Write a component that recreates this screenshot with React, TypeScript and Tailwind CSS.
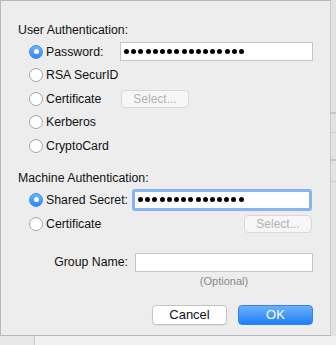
import React from 'react';

function Radio({ checked }: { checked?: boolean }) {
  if (checked) {
    return (
      <span className="w-[14px] h-[14px] shrink-0 rounded-full border border-[#3b8ef2] bg-gradient-to-b from-[#6db3fc] to-[#2b87f7] flex items-center justify-center">
        <span className="w-[5px] h-[5px] rounded-full bg-white" />
      </span>
    );
  }
  return (
    <span className="w-[14px] h-[14px] shrink-0 rounded-full border border-[#a8a8a8] bg-white shadow-[inset_0_1px_1px_rgba(0,0,0,0.06)]" />
  );
}

function Dots({ count }: { count: number }) {
  return (
    <span className="flex items-center gap-[2.2px]">
      {Array.from({ length: count }).map((_, i) => (
        <span key={i} className="w-[5px] h-[5px] rounded-full bg-black" />
      ))}
    </span>
  );
}

function SelectButton() {
  return (
    <div className="w-[68px] h-[18px] rounded-[4px] border border-[#d8d8d8] bg-[#f6f6f6] flex items-center justify-center text-[12px] text-[#b3b3b3]">
      Select...
    </div>
  );
}

export default function App() {
  return (
    <div className="w-[336px] h-[345px] bg-[#f3f3f3] flex flex-col overflow-hidden" style={{ fontFamily: '"Liberation Sans", Arial, sans-serif' }}>
      <div className="flex h-[336px]">
        {/* Sheet */}
        <div className="w-[331px] h-[336px] bg-[#ededed] border-l border-t border-b border-[#b9b9b9] border-r-[#c9c9c9] border-r flex flex-col text-[12.3px] leading-[16px] text-[#111]">
          <div className="mt-[21px] pl-[17px]">User Authentication:</div>

          <div className="mt-[2px] flex flex-col pl-[28px]">
            <div className="h-[23.5px] flex items-center">
              <Radio checked />
              <span className="ml-[3px] w-[74px]">Password:</span>
              <div className="w-[193px] h-[19px] bg-white border border-[#c6c6c6] flex items-center pl-[3px]">
                <Dots count={17} />
              </div>
            </div>
            <div className="h-[23.5px] flex items-center">
              <Radio />
              <span className="ml-[3px]">RSA SecurID</span>
            </div>
            <div className="h-[23.5px] flex items-center">
              <Radio />
              <span className="ml-[3px] w-[75px]">Certificate</span>
              <SelectButton />
            </div>
            <div className="h-[23.5px] flex items-center">
              <Radio />
              <span className="ml-[3px]">Kerberos</span>
            </div>
            <div className="h-[23.5px] flex items-center">
              <Radio />
              <span className="ml-[3px]">CryptoCard</span>
            </div>
          </div>

          <div className="mt-[12px] pl-[17px]">Machine Authentication:</div>

          <div className="mt-[2px] flex flex-col pl-[28px] pr-[18px]">
            <div className="h-[24px] flex items-center">
              <Radio checked />
              <span className="ml-[3px] w-[87px]">Shared Secret:</span>
              <div className="w-[182px] h-[22px] rounded-[3px] bg-white border-[3px] border-[#86b5f3] flex items-center pl-[3px]">
                <Dots count={15} />
              </div>
            </div>
            <div className="h-[24px] flex items-center justify-between">
              <div className="flex items-center">
                <Radio />
                <span className="ml-[3px]">Certificate</span>
              </div>
              <SelectButton />
            </div>
          </div>

          <div className="mt-[17px] flex items-center">
            <span className="w-[128px] text-right pr-[1px]">Group Name:</span>
            <div className="ml-[6px] w-[178px] h-[19px] bg-white border border-[#c6c6c6]" />
          </div>
          <div className="flex">
            <span className="ml-[134px] w-[178px] text-center text-[11px] leading-[14px] text-[#8a8a8a] mt-[2px]">(Optional)</span>
          </div>

          <div className="mt-[17px] flex justify-end gap-[11px] pr-[17px]">
            <div className="w-[75px] h-[20px] rounded-[4px] bg-white border border-[#c4c4c4] shadow-[0_1px_1px_rgba(0,0,0,0.08)] flex items-center justify-center text-[13px] text-[#111]">
              Cancel
            </div>
            <div className="w-[75px] h-[20px] rounded-[4px] bg-gradient-to-b from-[#6ab0fb] to-[#1b7ff8] border border-[#2f86f0] flex items-center justify-center text-[13px] text-white">
              OK
            </div>
          </div>
        </div>
        {/* background window edge */}
        <div className="w-[5px] h-full bg-[#e2e2e2] flex flex-col">
          <div className="h-[112px]" />
          <div className="h-[2px] bg-[#c8c8c8]" />
          <div className="h-[18px]" />
          <div className="h-[1px] bg-[#cfcfcf]" />
          <div className="h-[26px]" />
          <div className="h-[2px] bg-[#c8c8c8]" />
          <div className="h-[20px]" />
          <div className="h-[1px] bg-[#cfcfcf]" />
        </div>
      </div>
      <div className="flex-1 flex">
        <div className="w-[35px] bg-[#e7e7e7] border-r border-[#c8c8c8]" />
        <div className="flex-1 bg-[#f1f1f1]" />
      </div>
    </div>
  );
}
